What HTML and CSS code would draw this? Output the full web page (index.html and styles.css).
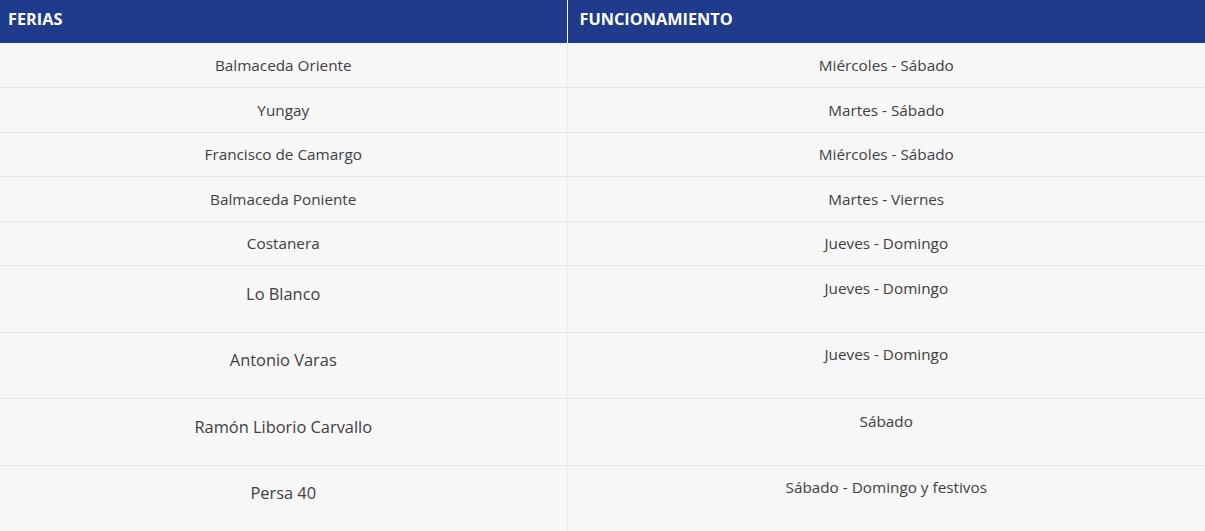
FILE: index.html
```html
<!DOCTYPE html>
<html lang="es">
<head>
<meta charset="utf-8">
<title>Ferias</title>
<link rel="stylesheet" href="styles.css">
</head>
<body>
<table class="ferias">
  <thead>
    <tr><th class="c1">FERIAS</th><th class="c2">FUNCIONAMIENTO</th></tr>
  </thead>
  <tbody>
    <tr class="first"><td>Balmaceda Oriente</td><td>Miércoles - Sábado</td></tr>
    <tr><td>Yungay</td><td>Martes - Sábado</td></tr>
    <tr><td>Francisco de Camargo</td><td>Miércoles - Sábado</td></tr>
    <tr><td>Balmaceda Poniente</td><td>Martes - Viernes</td></tr>
    <tr><td>Costanera</td><td>Jueves - Domingo</td></tr>
    <tr class="tall"><td><p class="big">Lo Blanco</p></td><td>Jueves - Domingo</td></tr>
    <tr class="tall"><td><p class="big">Antonio Varas</p></td><td>Jueves - Domingo</td></tr>
    <tr class="tall"><td><p class="big">Ramón Liborio Carvallo</p></td><td>Sábado</td></tr>
    <tr class="tall"><td><p class="big">Persa 40</p></td><td>Sábado - Domingo y festivos</td></tr>
  </tbody>
</table>
</body>
</html>
```
FILE: styles.css
```css
html, body {
  margin: 0;
  padding: 0;
  background: #f7f7f7;
}
.ferias {
  width: 1205px;
  border-collapse: collapse;
  font-family: "Open Sans", "Liberation Sans", sans-serif;
  background: #f7f7f7;
  color: #404040;
}
.ferias th {
  background: #1f3b8b;
  color: #fff;
  font-size: 16.3px;
  line-height: 22px;
  font-weight: 700;
  text-align: left;
  height: 42.5px;
  padding: 0 0 4px;
  box-sizing: border-box;
  vertical-align: middle;
}
.ferias th.c1 {
  width: 567px;
  padding-left: 8px;
  border-right: 1px solid #ffffff;
}
.ferias th.c2 {
  padding-left: 12px;
}
.ferias td {
  font-size: 15.3px;
  line-height: 22.5px;
  text-align: center;
  vertical-align: top;
  padding: 10.5px 10px 10.5px;
  border-bottom: 1px solid #e6e6e6;
}
.ferias tr.first td {
  padding-top: 11px;
  padding-bottom: 11px;
}
.ferias td:first-child {
  border-right: 1px solid #ececec;
}
.ferias tr.tall td {
  height: 44.5px;
}
.big {
  margin: 0;
  font-size: 16.4px;
  line-height: 34px;
}
```
